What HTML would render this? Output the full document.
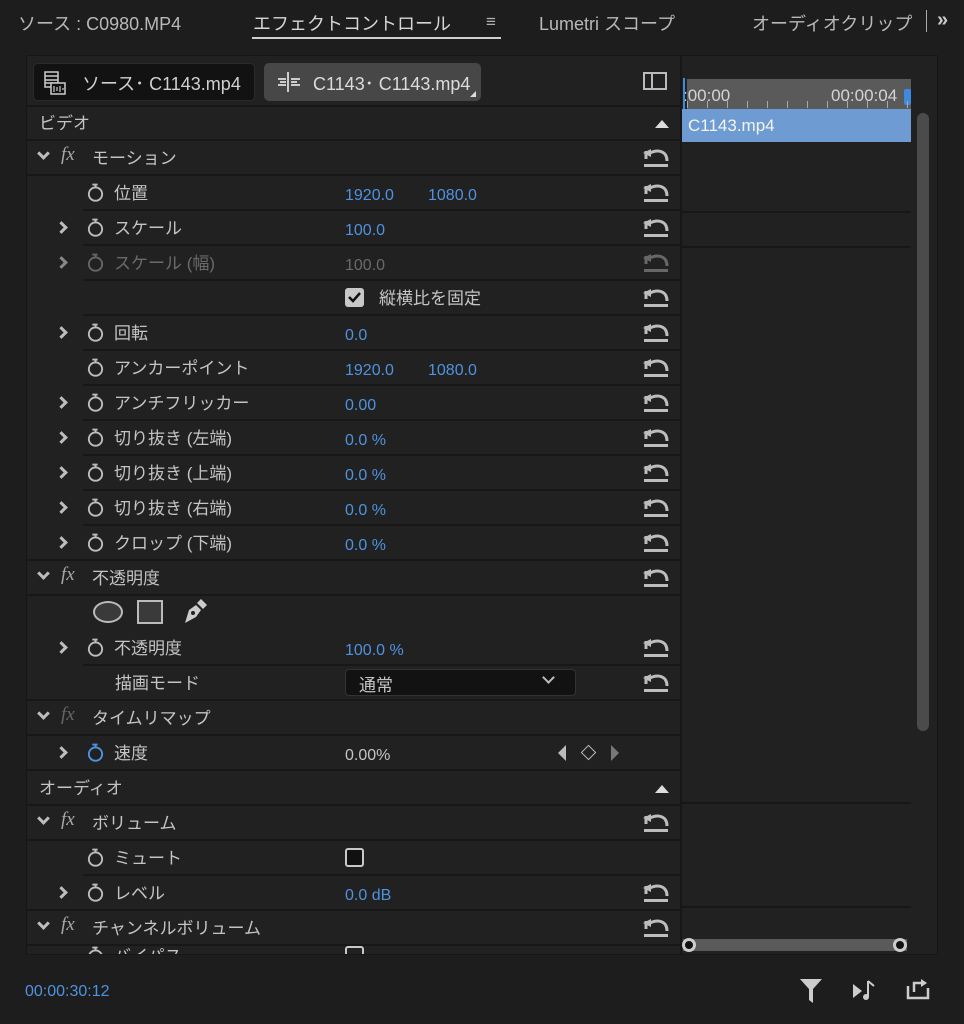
<!DOCTYPE html>
<html><head><meta charset="utf-8"><style>
*{margin:0;padding:0;box-sizing:border-box}
body{width:964px;height:1024px;background:#1d1d1d;font-family:"Liberation Sans","Noto Sans CJK JP",sans-serif;color:#c4c4c4;position:relative;overflow:hidden;font-size:17px}
.a{position:absolute;white-space:nowrap}
.panel{position:absolute;left:26px;top:55px;width:912px;height:900px;background:#212121;border:1px solid #161616;overflow:hidden}
.row{position:absolute;left:0;width:654px;height:35px;border-bottom:2px solid #171717}
.prow{position:absolute;left:56px;width:598px;height:35px;border-bottom:2px solid #171717}
.t{position:absolute;top:3px;white-space:nowrap}
.v{top:11px !important;font-size:16px}
.blue{color:#4e93e0}
.dim{color:#6a6a6a}
.chev{position:absolute;width:9px;height:9px;border-right:3px solid #bdbdbd;border-bottom:3px solid #bdbdbd}
.fx{position:absolute;top:3px;font-family:"Liberation Serif",serif;font-style:italic;font-size:19px;color:#a8a8a8}
.sw{position:absolute;width:17px;height:19px}
.rs{position:absolute;left:615px;top:7px;width:28px;height:20px}
</style></head><body>
<svg width="0" height="0" style="position:absolute">
<defs>
<symbol id="rs" viewBox="0 0 28 20"><path d="M4 3 V11" stroke="#bdbdbd" stroke-width="3" fill="none"/><path d="M1 5 L9 1 L9 9 Z" fill="#bdbdbd"/><path d="M8 5 C16 1 25 3 25 13" stroke="#bdbdbd" stroke-width="3" fill="none"/><path d="M2 17.5 H26" stroke="#bdbdbd" stroke-width="3"/></symbol>
<symbol id="sw" viewBox="0 0 16 18"><circle cx="8" cy="10.5" r="6.3" stroke="currentColor" stroke-width="1.8" fill="none"/><path d="M5 1.5 H10 M8 1.5 V4.5" stroke="currentColor" stroke-width="1.8"/></symbol>
</defs></svg>

<div class="a" style="left:18px;top:10px;font-size:18px;color:#b8b8b8">ソース : C0980.MP4</div>
<div class="a" style="left:253px;top:10px;font-size:18px;color:#d6d6d6">エフェクトコントロール</div>
<div class="a" style="left:252px;top:37px;width:249px;height:2px;background:#cfcfcf"></div>
<div class="a" style="left:486px;top:12px;font-size:17px;color:#b0b0b0">≡</div>
<div class="a" style="left:539px;top:10px;font-size:18px;color:#b8b8b8">Lumetri スコープ</div>
<div class="a" style="left:752px;top:10px;font-size:18px;color:#b8b8b8;width:174px;overflow:hidden">オーディオクリップ</div>
<div class="a" style="left:926px;top:10px;width:1px;height:22px;background:#aaa"></div>
<div class="a" style="left:937px;top:9px;font-size:20px;font-weight:bold;color:#ccc">»</div>

<div class="panel">
 <div class="a" style="left:6px;top:7px;width:222px;height:38px;background:#121212;border:1px solid #2a2a2a;border-radius:5px"></div>
 <svg class="a" style="left:17px;top:15px" width="22" height="24" viewBox="0 0 22 24"><rect x="1" y="1" width="13" height="15" fill="none" stroke="#ccc" stroke-width="1.5"/><path d="M1 5H14M1 9H14M1 12H14" stroke="#ccc" stroke-width="1.5"/><rect x="7" y="12" width="14" height="11" fill="#121212" stroke="#ccc" stroke-width="1.5"/><path d="M10 15V21M13 16V20M16 15V21M19 17V19" stroke="#ccc" stroke-width="1.2"/></svg>
 <div class="a" style="left:55px;top:14px;font-size:18px;color:#d0d0d0">ソース･ C1143.mp4</div>
 <div class="a" style="left:237px;top:7px;width:217px;height:38px;background:#474747;border-radius:5px"></div>
 <svg class="a" style="left:249px;top:15px" width="26" height="22" viewBox="0 0 26 22"><path d="M12 1V21" stroke="#ccc" stroke-width="2"/><path d="M2 8H10M2 14H10M15 8H24M15 14H24M4 11H10M15 11H21" stroke="#ccc" stroke-width="2"/></svg>
 <div class="a" style="left:286px;top:14px;font-size:18px;color:#dcdcdc">C1143･ C1143.mp4</div>
 <div class="a" style="left:443px;top:35px;width:0;height:0;border-left:6px solid transparent;border-bottom:6px solid #ddd"></div>
 <svg class="a" style="left:616px;top:16px" width="24" height="18"><rect x="1" y="1" width="22" height="16" fill="none" stroke="#bbb" stroke-width="2"/><path d="M9 1V17" stroke="#bbb" stroke-width="2"/></svg>
 <div class="a" style="left:0;top:49px;width:654px;height:2px;background:#171717"></div>
 <div class="a" style="left:653px;top:0;width:2px;height:900px;background:#171717"></div>

 <div class="a" style="left:660px;top:23px;width:224px;height:30px;background:#5a5a5a"></div>
 <div class="a" style="left:656px;top:30px;font-size:17px;color:#d4d4d4">:00:00</div>
 <div class="a" style="left:804px;top:30px;font-size:17px;color:#d4d4d4">00:00:04</div>
 <div class="a" style="left:656px;top:22px;width:2px;height:32px;background:#3d8ae0"></div>
 <div class="a" style="left:877px;top:33px;width:7px;height:16px;background:#3d8ae0;border-radius:2px"></div>
 <div class="a" style="left:660px;top:45px;width:224px;height:7px;background:repeating-linear-gradient(90deg,#aaa 0 1px,transparent 1px 20px)"></div>
 <div class="a" style="left:655px;top:53px;width:229px;height:33px;background:#6e9bd1"></div>
 <div class="a" style="left:661px;top:60px;font-size:17px;color:#f4f4f4">C1143.mp4</div>
 <div class="a" style="left:890px;top:57px;width:12px;height:618px;background:#4b4b4b;border-radius:6px"></div>
 <div class="a" style="left:656px;top:883px;width:224px;height:12px;background:#5a5a5a"></div>
 <div class="a" style="left:655px;top:882px;width:14px;height:14px;border-radius:7px;background:#111;border:3px solid #ccc"></div>
 <div class="a" style="left:866px;top:882px;width:14px;height:14px;border-radius:7px;background:#111;border:3px solid #ccc"></div>
 <div class="a" style="left:655px;top:155px;width:229px;height:2px;background:#171717"></div>
 <div class="a" style="left:655px;top:190px;width:229px;height:2px;background:#171717"></div>
 <div class="a" style="left:655px;top:746px;width:229px;height:2px;background:#171717"></div>
 <div class="a" style="left:655px;top:850px;width:229px;height:2px;background:#171717"></div>

 <div class="row" style="top:50px"><div class="t" style="left:12px">ビデオ</div><div class="a" style="left:628px;top:14px;border-left:7px solid transparent;border-right:7px solid transparent;border-bottom:8px solid #ddd"></div></div>

 <div class="row" style="top:85px"><div class="chev" style="left:12px;top:8px;transform:rotate(45deg)"></div><div class="fx" style="left:34px">fx</div><div class="t" style="left:65px">モーション</div><svg class="rs"><use href="#rs"/></svg></div>

 <div class="prow" style="top:120px"><svg class="sw" style="left:4px;top:7px;color:#bdbdbd"><use href="#sw"/></svg><div class="t" style="left:31px">位置</div><div class="t blue v" style="left:262px">1920.0</div><div class="t blue v" style="left:345px">1080.0</div><svg class="rs" style="left:559px"><use href="#rs"/></svg></div>

 <div class="prow" style="top:155px"><div class="chev" style="left:-26px;top:12px;transform:rotate(-45deg)"></div><svg class="sw" style="left:4px;top:7px;color:#bdbdbd"><use href="#sw"/></svg><div class="t" style="left:31px">スケール</div><div class="t blue v" style="left:262px">100.0</div><svg class="rs" style="left:559px"><use href="#rs"/></svg></div>

 <div class="prow" style="top:190px"><div class="chev" style="left:-26px;top:12px;transform:rotate(-45deg);border-color:#888"></div><svg class="sw" style="left:4px;top:7px;color:#666"><use href="#sw"/></svg><div class="t dim" style="left:31px">スケール (幅)</div><div class="t dim v" style="left:262px">100.0</div><svg class="rs" style="left:559px;opacity:.45"><use href="#rs"/></svg></div>

 <div class="prow" style="top:225px"><div class="a" style="left:262px;top:7px;width:19px;height:19px;background:#c8c8c8;border-radius:3px"></div><svg class="a" style="left:265px;top:11px" width="13" height="11"><path d="M1 5 L5 9 L12 1" stroke="#111" stroke-width="2.5" fill="none"/></svg><div class="t" style="left:296px">縦横比を固定</div><svg class="rs" style="left:559px"><use href="#rs"/></svg></div>

 <div class="prow" style="top:260px"><div class="chev" style="left:-26px;top:12px;transform:rotate(-45deg)"></div><svg class="sw" style="left:4px;top:7px;color:#bdbdbd"><use href="#sw"/></svg><div class="t" style="left:31px">回転</div><div class="t blue v" style="left:262px">0.0</div><svg class="rs" style="left:559px"><use href="#rs"/></svg></div>

 <div class="prow" style="top:295px"><svg class="sw" style="left:4px;top:7px;color:#bdbdbd"><use href="#sw"/></svg><div class="t" style="left:31px">アンカーポイント</div><div class="t blue v" style="left:262px">1920.0</div><div class="t blue v" style="left:345px">1080.0</div><svg class="rs" style="left:559px"><use href="#rs"/></svg></div>

 <div class="prow" style="top:330px"><div class="chev" style="left:-26px;top:12px;transform:rotate(-45deg)"></div><svg class="sw" style="left:4px;top:7px;color:#bdbdbd"><use href="#sw"/></svg><div class="t" style="left:31px">アンチフリッカー</div><div class="t blue v" style="left:262px">0.00</div><svg class="rs" style="left:559px"><use href="#rs"/></svg></div>

 <div class="prow" style="top:365px"><div class="chev" style="left:-26px;top:12px;transform:rotate(-45deg)"></div><svg class="sw" style="left:4px;top:7px;color:#bdbdbd"><use href="#sw"/></svg><div class="t" style="left:31px">切り抜き (左端)</div><div class="t blue v" style="left:262px">0.0 %</div><svg class="rs" style="left:559px"><use href="#rs"/></svg></div>

 <div class="prow" style="top:400px"><div class="chev" style="left:-26px;top:12px;transform:rotate(-45deg)"></div><svg class="sw" style="left:4px;top:7px;color:#bdbdbd"><use href="#sw"/></svg><div class="t" style="left:31px">切り抜き (上端)</div><div class="t blue v" style="left:262px">0.0 %</div><svg class="rs" style="left:559px"><use href="#rs"/></svg></div>

 <div class="prow" style="top:435px"><div class="chev" style="left:-26px;top:12px;transform:rotate(-45deg)"></div><svg class="sw" style="left:4px;top:7px;color:#bdbdbd"><use href="#sw"/></svg><div class="t" style="left:31px">切り抜き (右端)</div><div class="t blue v" style="left:262px">0.0 %</div><svg class="rs" style="left:559px"><use href="#rs"/></svg></div>

 <div class="prow" style="top:470px;left:0;width:654px"><div class="chev" style="left:30px;top:12px;transform:rotate(-45deg)"></div><svg class="sw" style="left:60px;top:7px;color:#bdbdbd"><use href="#sw"/></svg><div class="t" style="left:87px">クロップ (下端)</div><div class="t blue v" style="left:318px">0.0 %</div><svg class="rs"><use href="#rs"/></svg></div>

 <div class="row" style="top:505px"><div class="chev" style="left:12px;top:8px;transform:rotate(45deg)"></div><div class="fx" style="left:34px">fx</div><div class="t" style="left:65px">不透明度</div><svg class="rs"><use href="#rs"/></svg></div>

 <div class="a" style="left:66px;top:545px;width:30px;height:22px;border-radius:50%;background:#3a3a3a;border:2px solid #bbb"></div>
 <div class="a" style="left:110px;top:544px;width:26px;height:24px;background:#3a3a3a;border:2px solid #bbb"></div>
 <svg class="a" style="left:154px;top:541px" width="28" height="28" viewBox="0 0 28 28"><path d="M4 26 L8 13 L15 8 L20 13 L15 20 Z" fill="#ccc"/><path d="M16 6 L20 2 L26 8 L22 12 Z" fill="#ccc"/><circle cx="12" cy="16" r="2" fill="#212121"/></svg>

 <div class="prow" style="top:575px"><div class="chev" style="left:-26px;top:12px;transform:rotate(-45deg)"></div><svg class="sw" style="left:4px;top:7px;color:#bdbdbd"><use href="#sw"/></svg><div class="t" style="left:31px">不透明度</div><div class="t blue v" style="left:262px">100.0 %</div><svg class="rs" style="left:559px"><use href="#rs"/></svg></div>

 <div class="row" style="top:610px"><div class="t" style="left:88px">描画モード</div><div class="a" style="left:318px;top:3px;width:231px;height:27px;background:#121212;border:1px solid #333;border-radius:4px"></div><div class="t" style="left:332px;top:5px">通常</div><div class="chev" style="left:517px;top:7px;transform:rotate(45deg);border-width:2.5px"></div><svg class="rs"><use href="#rs"/></svg></div>

 <div class="row" style="top:645px"><div class="chev" style="left:12px;top:8px;transform:rotate(45deg)"></div><div class="fx" style="left:34px;color:#666">fx</div><div class="t" style="left:65px">タイムリマップ</div></div>

 <div class="row" style="top:680px"><div class="chev" style="left:30px;top:12px;transform:rotate(-45deg)"></div><svg class="sw" style="left:60px;top:7px;color:#4e93e0"><use href="#sw"/></svg><div class="t" style="left:87px">速度</div><div class="t v" style="left:318px">0.00%</div>
  <div class="a" style="left:531px;top:9px;border-top:8px solid transparent;border-bottom:8px solid transparent;border-right:8px solid #bbb"></div>
  <div class="a" style="left:556px;top:11px;width:11px;height:11px;border:1.5px solid #bbb;transform:rotate(45deg)"></div>
  <div class="a" style="left:584px;top:9px;border-top:8px solid transparent;border-bottom:8px solid transparent;border-left:8px solid #777"></div></div>

 <div class="row" style="top:715px"><div class="t" style="left:12px">オーディオ</div><div class="a" style="left:628px;top:14px;border-left:7px solid transparent;border-right:7px solid transparent;border-bottom:8px solid #ddd"></div></div>

 <div class="row" style="top:750px"><div class="chev" style="left:12px;top:8px;transform:rotate(45deg)"></div><div class="fx" style="left:34px">fx</div><div class="t" style="left:65px">ボリューム</div><svg class="rs"><use href="#rs"/></svg></div>

 <div class="prow" style="top:785px"><svg class="sw" style="left:4px;top:7px;color:#bdbdbd"><use href="#sw"/></svg><div class="t" style="left:31px">ミュート</div><div class="a" style="left:262px;top:7px;width:19px;height:19px;background:#111;border:2.5px solid #c8c8c8;border-radius:3px"></div></div>

 <div class="row" style="top:820px"><div class="chev" style="left:30px;top:12px;transform:rotate(-45deg)"></div><svg class="sw" style="left:60px;top:7px;color:#bdbdbd"><use href="#sw"/></svg><div class="t" style="left:87px">レベル</div><div class="t blue v" style="left:318px">0.0 dB</div><svg class="rs"><use href="#rs"/></svg></div>

 <div class="row" style="top:855px"><div class="chev" style="left:12px;top:8px;transform:rotate(45deg)"></div><div class="fx" style="left:34px">fx</div><div class="t" style="left:65px">チャンネルボリューム</div><svg class="rs"><use href="#rs"/></svg></div>

 <div class="a" style="left:56px;top:890px"><svg class="sw" style="left:4px;top:0;color:#bdbdbd"><use href="#sw"/></svg><div class="a" style="left:31px;top:-4px">バイパス</div><div class="a" style="left:262px;top:0;width:19px;height:19px;border:2.5px solid #c8c8c8;border-radius:3px"></div></div>
</div>

<div class="a blue" style="left:25px;top:983px;font-size:16px">00:00:30:12</div>
<svg class="a" style="left:799px;top:978px" width="24" height="26"><path d="M1 1 H23 L14 11 V25 L10 22 V11 Z" fill="#ccc"/></svg>
<svg class="a" style="left:852px;top:980px" width="26" height="22"><path d="M1 4 L10 11 L1 18 Z" fill="#ccc"/><path d="M16 1 V17 M16 1 L22 6" stroke="#ccc" stroke-width="2" fill="none"/><circle cx="14" cy="17" r="3" fill="#ccc"/></svg>
<svg class="a" style="left:906px;top:978px" width="24" height="22"><path d="M2 8 V20 H22 V10" stroke="#ccc" stroke-width="2.5" fill="none"/><path d="M8 14 V5 H16" stroke="#ccc" stroke-width="2.5" fill="none"/><path d="M15 1 L21 5 L15 9 Z" fill="#ccc"/></svg>
</body></html>
